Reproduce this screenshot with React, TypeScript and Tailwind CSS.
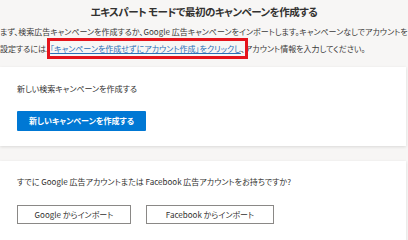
export default function App() {
  return (
    <div className="w-[408px] h-[240px] overflow-hidden bg-[#f7f6f5] text-[#323130] font-['Noto_Sans_CJK_JP','Noto_Sans',sans-serif] [font-feature-settings:'palt']">
      <h1 className="pt-[3px] text-center text-[10.5px] leading-[18px] font-semibold tracking-[-0.5px]">
        エキスパート モードで最初のキャンペーンを作成する
      </h1>
      <p className="mt-[2px] text-[8px] leading-[17px] text-[#3b3a39]">
        まず、検索広告キャンペーンを作成するか、Google 広告キャンペーンをインポートします。キャンペーンなしでアカウントを設定するには、
        <span className="relative">
          <span className="text-[#2b6fb8] underline">「キャンペーンを作成せずにアカウント作成」をクリックし</span>、
          <span className="absolute -left-[3px] -right-[3px] -top-[5px] -bottom-[5px] border-[3px] border-[#e5141c]" />
        </span>
        アカウント情報を入力してください。
      </p>

      <div className="mt-[10px] mr-[2px] bg-white px-[17px] pt-[15px] pb-[15px] shadow-[0_1px_3px_rgba(0,0,0,0.12)]">
        <p className="text-[8px] leading-[14px]">新しい検索キャンペーンを作成する</p>
        <button className="mt-[15px] h-[20px] w-[129px] rounded-[1px] bg-[#0078d4] text-[8px] font-semibold text-white">
          新しいキャンペーンを作成する
        </button>
      </div>

      <div className="mt-[15px] mr-[2px] h-[90px] bg-white px-[17px] pt-[14px] shadow-[0_1px_3px_rgba(0,0,0,0.12)]">
        <p className="text-[8px] leading-[14px]">
          すでに Google 広告アカウントまたは Facebook 広告アカウントをお持ちですか?
        </p>
        <div className="mt-[16px] flex gap-[15px]">
          <button className="h-[19px] w-[114px] border border-[#8a8886] bg-white text-[8px]">
            Google からインポート
          </button>
          <button className="h-[19px] w-[128px] border border-[#8a8886] bg-white text-[8px]">
            Facebook からインポート
          </button>
        </div>
      </div>
    </div>
  );
}
